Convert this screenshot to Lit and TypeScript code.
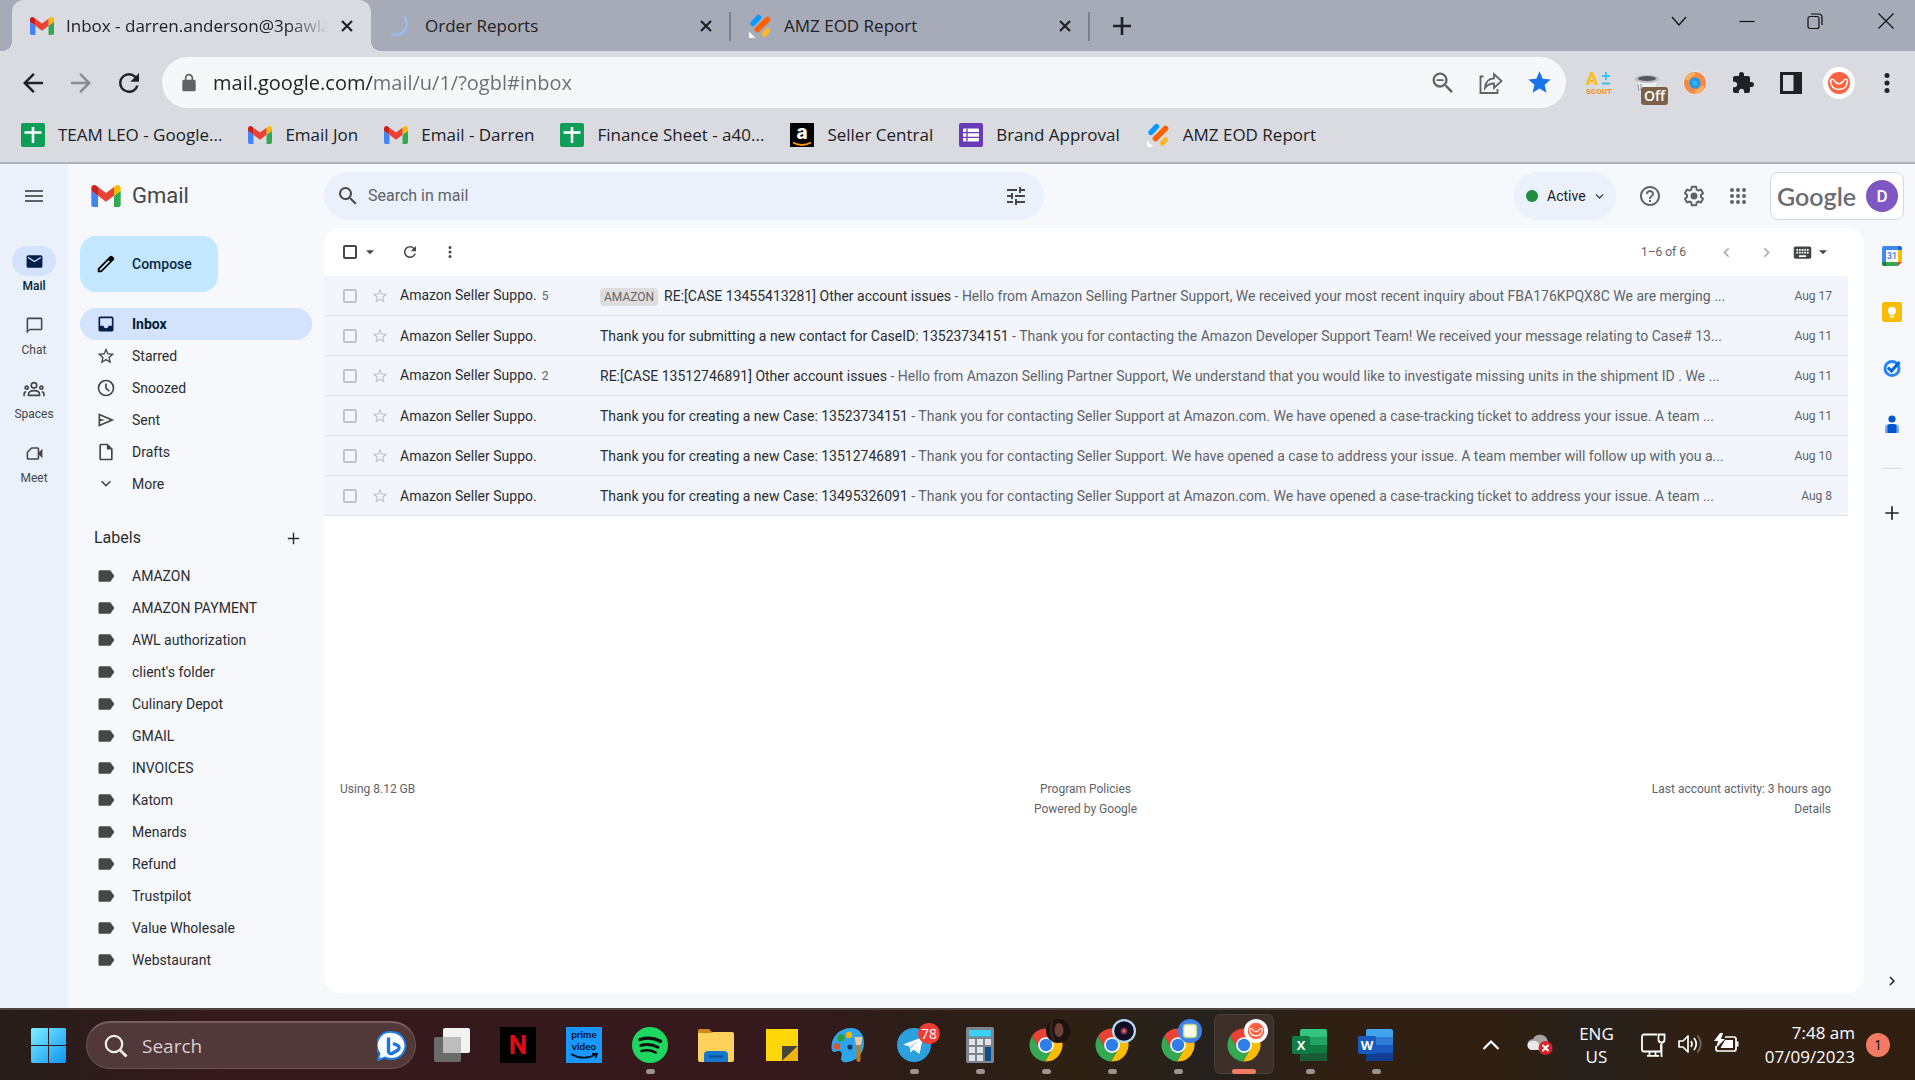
import { LitElement, html, svg, css, nothing } from "lit";
import type { TemplateResult, SVGTemplateResult } from "lit";
import { customElement } from "lit/decorators.js";
import { classMap } from "lit/directives/class-map.js";

/* ---------- icon helpers ---------- */

const glyph = (d: string, size = 20) =>
  html`<svg width=${size} height=${size} viewBox="0 0 24 24" fill="currentColor" aria-hidden="true"><path fill-rule="evenodd" d=${d}></path></svg>`;

const art = (w: number, h: number, box: string, body: SVGTemplateResult) =>
  html`<svg width=${w} height=${h} viewBox=${box} fill="none" aria-hidden="true">${body}</svg>`;

const P = {
  search: "M15.5 14h-.79l-.28-.27A6.471 6.471 0 0 0 16 9.5 6.5 6.5 0 1 0 9.5 16c1.61 0 3.09-.59 4.23-1.57l.27.28v.79l5 4.99L20.49 19l-4.99-5zm-6 0C7.01 14 5 11.99 5 9.5S7.01 5 9.5 5 14 7.01 14 9.5 11.99 14 9.5 14z",
  zoomOut: "M15.5 14h-.79l-.28-.27A6.471 6.471 0 0 0 16 9.5 6.5 6.5 0 1 0 9.5 16c1.61 0 3.09-.59 4.23-1.57l.27.28v.79l5 4.99L20.49 19l-4.99-5zm-6 0C7.01 14 5 11.99 5 9.5S7.01 5 9.5 5 14 7.01 14 9.5 11.99 14 9.5 14zM6.5 8.8h6v1.5h-6z",
  tune: "M3 17v2h6v-2H3zM3 5v2h10V5H3zm10 16v-2h8v-2h-8v-2h-2v6h2zM7 9v2H3v2h4v2h2V9H7zm14 4v-2H11v2h10zm-6-4h2V7h4V5h-4V3h-2v6z",
  help: "M11 18h2v-2h-2v2zm1-16C6.48 2 2 6.48 2 12s4.48 10 10 10 10-4.48 10-10S17.52 2 12 2zm0 18c-4.41 0-8-3.59-8-8s3.59-8 8-8 8 3.59 8 8-3.59 8-8 8zm0-14c-2.21 0-4 1.79-4 4h2c0-1.1.9-2 2-2s2 .9 2 2c0 2-3 1.75-3 5h2c0-2.25 3-2.5 3-5 0-2.21-1.79-4-4-4z",
  gear: "M13.85 22.25h-3.7c-.74 0-1.36-.54-1.45-1.27l-.27-1.89c-.27-.14-.53-.29-.79-.46l-1.8.72c-.7.26-1.47-.03-1.81-.65L2.2 15.53c-.35-.66-.2-1.44.36-1.88l1.53-1.19c-.01-.15-.02-.3-.02-.46 0-.15.01-.31.02-.46l-1.52-1.19c-.59-.45-.74-1.26-.37-1.88l1.85-3.19c.34-.62 1.11-.9 1.79-.63l1.81.73c.26-.17.52-.32.78-.46l.27-1.91c.09-.7.71-1.25 1.44-1.25h3.7c.74 0 1.36.54 1.45 1.27l.27 1.89c.27.14.53.29.79.46l1.8-.72c.71-.26 1.48.03 1.82.65l1.84 3.18c.36.66.2 1.44-.36 1.88l-1.52 1.19c.01.15.02.3.02.46s-.01.31-.02.46l1.52 1.19c.56.45.72 1.23.37 1.86l-1.86 3.22c-.34.62-1.11.9-1.8.63l-1.8-.72c-.26.17-.52.32-.78.46l-.27 1.91c-.1.68-.72 1.22-1.46 1.22zm-3.23-2h2.76l.37-2.55.53-.22c.44-.18.88-.44 1.34-.78l.45-.34 2.38.96 1.38-2.4-2.03-1.58.07-.56c.03-.26.06-.51.06-.78s-.03-.53-.06-.78l-.07-.56 2.03-1.58-1.39-2.4-2.39.96-.45-.35c-.42-.32-.87-.58-1.33-.77l-.52-.22-.37-2.55h-2.76l-.37 2.55-.53.21c-.44.19-.88.44-1.34.79l-.45.33-2.38-.95-1.39 2.39 2.03 1.58-.07.56a7 7 0 0 0-.06.79c0 .26.02.53.06.78l.07.56-2.03 1.58 1.38 2.4 2.39-.96.45.35c.43.33.86.58 1.33.77l.53.22.38 2.55zM12 8.5a3.5 3.5 0 1 0 0 7 3.5 3.5 0 0 0 0-7z",
  apps: "M6 8a2 2 0 1 0 0-4 2 2 0 0 0 0 4zm6 0a2 2 0 1 0 0-4 2 2 0 0 0 0 4zm6 0a2 2 0 1 0 0-4 2 2 0 0 0 0 4zM6 14a2 2 0 1 0 0-4 2 2 0 0 0 0 4zm6 0a2 2 0 1 0 0-4 2 2 0 0 0 0 4zm6 0a2 2 0 1 0 0-4 2 2 0 0 0 0 4zM6 20a2 2 0 1 0 0-4 2 2 0 0 0 0 4zm6 0a2 2 0 1 0 0-4 2 2 0 0 0 0 4zm6 0a2 2 0 1 0 0-4 2 2 0 0 0 0 4z",
  starLine: "M22 9.24l-7.19-.62L12 2 9.19 8.63 2 9.24l5.46 4.73L5.82 21 12 17.27 18.18 21l-1.63-7.03L22 9.24zM12 15.4l-3.76 2.27 1-4.28-3.32-2.88 4.38-.38L12 6.1l1.71 4.04 4.38.38-3.32 2.88 1 4.28L12 15.4z",
  star: "M12 17.27L18.18 21l-1.64-7.03L22 9.24l-7.19-.61L12 2 9.19 8.63 2 9.24l5.46 4.73L5.82 21z",
  clock: "M12 2a10 10 0 1 0 0 20 10 10 0 0 0 0-20zm0 18a8 8 0 1 1 0-16 8 8 0 0 1 0 16zM11 6.5v6l4.2 4.1 1.4-1.4-3.6-3.6V6.5z",
  send: "M3 20V4l19 8zm2-3l11.85-5L5 7v3.5l6 1.5-6 1.5z",
  draft: "M14 2H6c-1.1 0-2 .9-2 2v16c0 1.1.9 2 2 2h12c1.1 0 2-.9 2-2V8l-6-6zM6 20V4h7v5h5v11H6z",
  inbox: "M19 3H5c-1.1 0-2 .9-2 2v14c0 1.1.9 2 2 2h14c1.1 0 2-.9 2-2V5c0-1.1-.9-2-2-2zm0 11h-4c0 1.66-1.35 3-3 3s-3-1.34-3-3H5V5h14v9z",
  more: "M12 15.4l-6-6L7.4 8l4.6 4.6L16.6 8 18 9.4z",
  mail: "M20 4H4c-1.1 0-2 .9-2 2v12c0 1.1.9 2 2 2h16c1.1 0 2-.9 2-2V6c0-1.1-.9-2-2-2zm0 4l-8 5-8-5V6l8 5 8-5v2z",
  chat: "M20 2H4c-1.1 0-2 .9-2 2v18l4-4h14c1.1 0 2-.9 2-2V4c0-1.1-.9-2-2-2zm0 14H6l-2 2V4h16v12z",
  meet: "M8 4h8a2 2 0 0 1 2 2v4l4-4v12l-4-4v4a2 2 0 0 1-2 2H4a2 2 0 0 1-2-2v-8zm.8 2L4 10.8V18h12V6z",
  label: "M17.63 5.84C17.27 5.33 16.67 5 16 5L5 5.01C3.9 5.01 3 5.9 3 7v10c0 1.1.9 1.99 2 1.99L16 19c.67 0 1.27-.33 1.63-.84L22 12l-4.37-6.16z",
  pen: "M20.41 4.94l-1.35-1.35c-.78-.78-2.05-.78-2.83 0L3 16.82V21h4.18L20.41 7.77c.79-.78.79-2.05 0-2.83zm-14 14.12L5 19v-1.36l9.82-9.82 1.41 1.41-9.82 9.83z",
  refresh: "M17.65 6.35A7.958 7.958 0 0 0 12 4a8 8 0 1 0 7.73 10h-2.08A5.99 5.99 0 0 1 12 18c-3.31 0-6-2.69-6-6s2.69-6 6-6c1.66 0 3.14.69 4.22 1.78L13 11h7V4l-2.35 2.35z",
  dots: "M12 8a2 2 0 1 0 0-4 2 2 0 0 0 0 4zm0 6a2 2 0 1 0 0-4 2 2 0 0 0 0 4zm0 6a2 2 0 1 0 0-4 2 2 0 0 0 0 4z",
  keyboard: "M20 5H4c-1.1 0-1.99.9-1.99 2L2 17c0 1.1.9 2 2 2h16c1.1 0 2-.9 2-2V7c0-1.1-.9-2-2-2zm-9 3h2v2h-2V8zm0 3h2v2h-2v-2zM8 8h2v2H8V8zm0 3h2v2H8v-2zm-1 2H5v-2h2v2zm0-3H5V8h2v2zm9 7H8v-2h8v2zm0-4h-2v-2h2v2zm0-3h-2V8h2v2zm3 3h-2v-2h2v2zm0-3h-2V8h2v2z",
  back: "M20 11H7.83l5.59-5.59L12 4l-8 8 8 8 1.41-1.41L7.83 13H20v-2z",
  forward: "M4 11h12.17l-5.59-5.59L12 4l8 8-8 8-1.41-1.41L16.17 13H4v-2z",
  puzzle: "M20.5 11H19V7c0-1.1-.9-2-2-2h-4V3.5a2.5 2.5 0 0 0-5 0V5H4c-1.1 0-1.99.9-1.99 2v3.8H3.5c1.49 0 2.7 1.21 2.7 2.7s-1.21 2.7-2.7 2.7H2V20c0 1.1.9 2 2 2h3.8v-1.5c0-1.49 1.21-2.7 2.7-2.7s2.7 1.21 2.7 2.7V22H17c1.1 0 2-.9 2-2v-4h1.5a2.5 2.5 0 0 0 0-5z",
  lock: "M18 8h-1V6c0-2.76-2.24-5-5-5S7 3.24 7 6v2H6c-1.1 0-2 .9-2 2v10c0 1.1.9 2 2 2h12c1.1 0 2-.9 2-2V10c0-1.1-.9-2-2-2zM9 6c0-1.66 1.34-3 3-3s3 1.34 3 3v2H9V6z",
  plus: "M11 4h2v7h7v2h-7v7h-2v-7H4v-2h7z",
  prev: "M15.4 7.4L14 6l-6 6 6 6 1.4-1.4L10.8 12z",
  next: "M8.6 16.6L10 18l6-6-6-6-1.4 1.4 4.6 4.6z",
  caret: "M6 9.5h12l-6 6z",
  menu: "M3 18h18v-2H3v2zm0-5h18v-2H3v2zm0-7v2h18V6H3z",
};

const gmailMark = (w: number, h: number) => art(w, h, "52 42 88 66", svg`
  <path fill="#4285f4" d="M58 108h14V74L52 59v43c0 3.32 2.69 6 6 6"/>
  <path fill="#34a853" d="M120 108h14c3.32 0 6-2.69 6-6V59l-20 15"/>
  <path fill="#fbbc04" d="M120 48v26l20-15v-8c0-7.42-8.47-11.65-14.4-7.2"/>
  <path fill="#ea4335" d="M72 74V48l24 18 24-18v26L96 92"/>
  <path fill="#c5221f" d="M52 51v8l20 15V48l-5.6-4.2c-5.94-4.45-14.4-.22-14.4 7.2"/>`);

const jotMark = art(24, 24, "0 0 24 24", svg`
  <g stroke-linecap="round">
    <path d="M5 9.500 10.500 3.500" stroke="#0a99ff" stroke-width="5.400"/>
    <path d="M9.500 15.500 19.500 5.500" stroke="#ff6100" stroke-width="5.600"/>
    <path d="M16.500 20.300 19.500 16.800" stroke="#ffb629" stroke-width="5.200"/>
  </g>
  <path d="M1 17.500v5.500a1 1 0 0 0 1 1h5.500z" fill="#fff"/>`);

const sheetMark = art(24, 24, "0 0 24 24", svg`
  <rect width="24" height="24" rx="2" fill="#0f9d58"/>
  <path d="M12 4v16M3.500 9.500h17" stroke="#fff" stroke-width="2.600"/>`);

const amazonMark = art(24, 24, "0 0 24 24", svg`
  <rect width="24" height="24" fill="#000"/>
  <text x="12" y="16" text-anchor="middle" font-family="Inter, sans-serif" font-weight="800" font-size="19" fill="#fff">a</text>
  <path d="M3 19.500q9 5 18 0" stroke="#f90" stroke-width="1.800"/>`);

const formMark = art(24, 24, "0 0 24 24", svg`
  <rect width="24" height="24" rx="2" fill="#673ab7"/>
  <rect x="4" y="5.500" width="16" height="13" rx="1" fill="#fff"/>
  <path d="M4 9.700h16M4 14.300h16M8 5.500v13" stroke="#673ab7" stroke-width="1.300"/>`);

const smile = svg`
  <circle cx="16" cy="16" r="16" fill="#fff"/>
  <circle cx="16" cy="16" r="11" fill="#ff6240"/>
  <path d="M7.500 13.500q2-2.500 4 .5 4.500 5.500 9 0 2-3 4-.5-.5 9-8.500 9t-8.500-9z" stroke="#fff" stroke-width="1.500" stroke-linejoin="round"/>`;

/* ---------- browser frame ---------- */

@customElement("browser-frame")
class BrowserFrame extends LitElement {
  static styles = css`
    :host { display: block; font: 17px/24px "Open Sans", "Noto Sans", sans-serif; color: #202124; background: #d9dbe1; }
    svg { display: block; flex: none; }
    button { border: 0; padding: 0; background: none; color: inherit; font: inherit; display: grid; place-items: center; flex: none; }
    a { color: inherit; text-decoration: none; }
    .strip { display: flex; height: 51px; background: #a7abb8; padding-left: 12px; }
    .tab { display: flex; align-items: center; width: 359px; box-sizing: border-box; padding: 0 17px 0 18px; gap: 12px; position: relative; }
    .tab.on { background: #d9dbe1; border-radius: 12px 12px 0 0; }
    .tab.on::before, .tab.on::after { content: ""; position: absolute; bottom: 0; width: 10px; height: 10px; background: radial-gradient(circle at 0 0, transparent 10px, #d9dbe1 10px); }
    .tab.on::before { left: -10px; }
    .tab.on::after { right: -10px; transform: scaleX(-1); }
    .tab.line::after { content: ""; position: absolute; right: -1px; top: 12px; width: 2px; height: 29px; background: #7d808a; }
    .name { flex: 1; min-width: 0; overflow: hidden; white-space: nowrap; }
    .on .name { mask-image: linear-gradient(90deg, #000 84%, transparent); }
    .new { width: 66px; height: 51px; }
    .wins { display: flex; margin-left: auto; }
    .wins button { width: 68px; height: 42px; box-sizing: border-box; }
    .wins button:last-child { width: 66px; padding-left: 8px; }
    .bar { display: flex; align-items: center; height: 51px; padding: 6px 4px 0 9px; }
    .nav { width: 48px; height: 48px; }
    .nav.off { color: #898b90; }
    .omni { flex: 1; display: flex; align-items: center; height: 51px; border-radius: 26px; background: #f5f7f9; margin: 0 9px 0 9px; padding-left: 17px; padding-right: 3px; color: #5f6368; }
    .url { flex: 1; min-width: 0; border: 0; outline: 0; padding: 0; margin-left: 14px; font: 20px/28px "Open Sans", "Noto Sans", sans-serif; color: transparent; background: linear-gradient(90deg, #202124 160px, #6a6d72 160px); background-clip: text; -webkit-background-clip: text; }
    .fave { color: #1a73e8; }
    .ext { width: 48px; height: 48px; position: relative; }
    .off-tag { position: absolute; left: 18px; top: 28px; width: 27px; height: 18px; border-radius: 3px; background: #7b6147; color: #fff; font-weight: 600; font-size: 14px; line-height: 18px; }
    .marks { display: flex; align-items: center; height: 54px; padding-left: 21px; gap: 26px; border-bottom: 2px solid #b0b2b8; }
    .mark { display: flex; align-items: center; gap: 13px; white-space: nowrap; }
  `;

  private closeX = art(14, 14, "0 0 14 14", svg`<path d="M2 2l10 10M12 2L2 12" stroke="#202124" stroke-width="2.200"/>`);

  private tab(icon: TemplateResult, name: string, cls: object) {
    return html`<div class=${classMap({ tab: true, ...cls })}>
      ${icon}<span class="name">${name}</span>
      <button aria-label="Close tab">${this.closeX}</button>
    </div>`;
  }

  render() {
    const gm = gmailMark(24, 18);
    const spin = art(24, 24, "0 0 24 24", svg`<path d="M15 2.500a11 11 0 0 1-12.500 17.500" stroke="#9abcf2" stroke-width="2.600"/>`);
    const win = (d: string) => art(18, 18, "0 0 18 18", svg`<path d=${d} stroke="#111" stroke-width="1.200"/>`);
    const marks: [TemplateResult, string][] = [
      [sheetMark, "TEAM LEO - Google..."], [gm, "Email Jon"], [gm, "Email - Darren"],
      [sheetMark, "Finance Sheet - a40..."], [amazonMark, "Seller Central"],
      [formMark, "Brand Approval"], [jotMark, "AMZ EOD Report"],
    ];
    return html`
      <div class="strip">
        ${this.tab(gm, "Inbox - darren.anderson@3pawlabs.com", { on: true })}
        ${this.tab(spin, "Order Reports", { line: true })}
        ${this.tab(jotMark, "AMZ EOD Report", { line: true })}
        <button class="new" aria-label="New tab">${art(20, 20, "0 0 20 20", svg`<path d="M10 1v18M1 10h18" stroke="#202124" stroke-width="2.600"/>`)}</button>
        <div class="wins">
          <button aria-label="Search tabs">${win("M2 5l7 8 7-8")}</button>
          <button aria-label="Minimize">${win("M1.500 9.500h15")}</button>
          <button aria-label="Restore">${win("M4 4.500h7a2 2 0 0 1 2 2v8a2 2 0 0 1-2 2H4a2 2 0 0 1-2-2v-8a2 2 0 0 1 2-2zM5 2h7.500a3.500 3.500 0 0 1 3.500 3.500V13")}</button>
          <button aria-label="Close window">${win("M1.500 1.500l15 15M16.500 1.500l-15 15")}</button>
        </div>
      </div>
      <div class="bar">
        <button class="nav" aria-label="Back">${glyph(P.back, 30)}</button>
        <button class="nav off" aria-label="Forward">${glyph(P.forward, 30)}</button>
        <button class="nav" aria-label="Reload">${glyph(P.refresh, 30)}</button>
        <div class="omni">
          ${glyph(P.lock, 20)}
          <input class="url" aria-label="Address" value="mail.google.com/mail/u/1/?ogbl#inbox" />
          <button class="nav" aria-label="Zoom">${glyph(P.zoomOut, 28)}</button>
          <button class="nav" aria-label="Share">${art(24, 24, "0 0 24 24", svg`<path d="M4.500 5.500H1.500V22h17v-4M6 17c.5-7 4-9.500 9-9.700V3l7.500 7-7.500 7v-4.500c-4 0-6.500 1-9 4.500z" stroke="#5f6368" stroke-width="1.800"/>`)}</button>
          <button class="nav fave" aria-label="Bookmark">${glyph(P.star, 27)}</button>
        </div>
        <button class="ext" aria-label="Scout">${art(28, 28, "0 0 28 28", svg`
          <text x="1" y="16" font-family="Roboto, sans-serif" font-weight="900" font-size="18" fill="#fbbf24">A</text>
          <path d="M21 3v8M17 7h8M17 14.500h8" stroke="#35c3ee" stroke-width="1.800"/>
          <text x="1" y="25" font-family="Roboto, sans-serif" font-weight="900" font-size="8" fill="#f5962a">SCOUT</text>`)}</button>
        <button class="ext" aria-label="Coupon tool off">${art(26, 24, "0 0 26 24", svg`
          <path d="M3 8h20l-2.500 14h-15z" fill="#eceef0"/><path d="M4 13l1 7M7 13v7" stroke="#8d9094"/>
          <ellipse cx="13" cy="8" rx="12" ry="4" fill="#b9bcc1"/><ellipse cx="13" cy="7.500" rx="9" ry="2.600" fill="#55585c"/>`)}<span class="off-tag">Off</span></button>
        <button class="ext" aria-label="Capture">${art(24, 24, "0 0 24 24", svg`
          <circle cx="12" cy="12" r="12" fill="#f1e3d6"/><circle cx="12" cy="12" r="8" stroke="#ee8a4a" stroke-width="6"/>
          <path d="M4 9a9 9 0 0 1 8-6M20 15a9 9 0 0 1-8 6" stroke="#f9b66a" stroke-width="3"/>
          <circle cx="12" cy="12" r="5.500" fill="#2196e8"/><circle cx="12" cy="12" r="2.600" fill="#2bb9f6"/>`)}</button>
        <button class="ext" aria-label="Extensions">${glyph(P.puzzle, 24)}</button>
        <button class="ext" aria-label="Side panel">${art(22, 22, "0 0 22 22", svg`<path fill-rule="evenodd" d="M0 0h22v22H0zM3 3v16h10.500V3z" fill="#202124"/>`)}</button>
        <button class="ext" aria-label="Profile">${art(32, 32, "0 0 32 32", smile)}</button>
        <button class="ext" aria-label="Browser menu">${glyph(P.dots, 30)}</button>
      </div>
      <div class="marks">${marks.map(([i, t]) => html`<a class="mark" href="#">${i}<span>${t}</span></a>`)}</div>
    `;
  }
}

/* ---------- mail ---------- */

interface Mail { count?: string; tag?: string; subject: string; body: string; date: string; }

const MAILS: Mail[] = [
  { count: "5", tag: "AMAZON", subject: "RE:[CASE 13455413281] Other account issues", body: "Hello from Amazon Selling Partner Support, We received your most recent inquiry about FBA176KPQX8C We are merging ...", date: "Aug 17" },
  { subject: "Thank you for submitting a new contact for CaseID: 13523734151", body: "Thank you for contacting the Amazon Developer Support Team! We received your message relating to Case# 13...", date: "Aug 11" },
  { count: "2", subject: "RE:[CASE 13512746891] Other account issues", body: "Hello from Amazon Selling Partner Support, We understand that you would like to investigate missing units in the shipment ID . We ...", date: "Aug 11" },
  { subject: "Thank you for creating a new Case: 13523734151", body: "Thank you for contacting Seller Support at Amazon.com. We have opened a case-tracking ticket to address your issue. A team ...", date: "Aug 11" },
  { subject: "Thank you for creating a new Case: 13512746891", body: "Thank you for contacting Seller Support. We have opened a case to address your issue. A team member will follow up with you a...", date: "Aug 10" },
  { subject: "Thank you for creating a new Case: 13495326091", body: "Thank you for contacting Seller Support at Amazon.com. We have opened a case-tracking ticket to address your issue. A team ...", date: "Aug 8" },
];

const LABELS = ["AMAZON", "AMAZON PAYMENT", "AWL authorization", "client's folder", "Culinary Depot", "GMAIL", "INVOICES", "Katom", "Menards", "Refund", "Trustpilot", "Value Wholesale", "Webstaurant"];

@customElement("mail-app")
class MailApp extends LitElement {
  static styles = css`
    :host { display: grid; grid-template-columns: 68px 256px minmax(0, 1fr); background: #f6f8fc; color: #202124; font: 14px/20px Roboto, "Liberation Sans", sans-serif; }
    svg { display: block; flex: none; }
    button { border: 0; padding: 0; background: none; color: inherit; font: inherit; display: grid; place-items: center; flex: none; }
    a { color: inherit; text-decoration: none; }
    ul { list-style: none; margin: 0; padding: 0; }
    input[type="checkbox"] { appearance: none; display: block; margin: 0; width: 14px; height: 14px; box-sizing: border-box; border: 2px solid #c0c4c9; border-radius: 2px; }

    .rail { background: #eaf1fb; color: #444746; display: flex; flex-direction: column; align-items: center; }
    .burger { height: 64px; width: 48px; color: #5f6368; }
    .apps { display: flex; flex-direction: column; padding-top: 18px; }
    .app { display: flex; flex-direction: column; align-items: center; height: 64px; font-size: 12px; line-height: 20px; }
    .pill { width: 44px; height: 30px; border-radius: 15px; display: grid; place-items: center; }
    .app.on { color: #001d35; font-weight: 500; }
    .on .pill { background: #d3e3fd; color: #041e49; }

    .side { display: flex; flex-direction: column; padding: 0 12px; color: #2a2c30; }
    .brand { display: flex; align-items: center; gap: 11px; height: 64px; padding-left: 11px; font-size: 22px; color: #444746; }
    .compose { display: flex; align-items: center; justify-content: flex-start; gap: 15px; align-self: flex-start; width: 138px; box-sizing: border-box; height: 56px; margin: 8px 0 16px; padding-left: 15px; border-radius: 16px; background: #c2e7ff; color: #0b2a45; font-weight: 500; }
    .compose svg { color: #000; }
    .item { display: flex; align-items: center; gap: 16px; height: 32px; padding-left: 16px; border-radius: 16px; }
    .item svg { color: #444746; }
    .item.on { background: #d3e3fd; color: #001d35; font-weight: 700; }
    .item.on svg { color: #041e49; }
    .head { display: flex; justify-content: space-between; align-items: center; height: 32px; margin: 22px 0 6px; padding: 0 10px 0 14px; font-size: 16px; }
    h2 { font: inherit; margin: 0; font-weight: 400; }

    .top { display: flex; align-items: center; height: 64px; padding-right: 11px; color: #5f6368; }
    .search { display: flex; align-items: center; flex: 0 1 720px; min-width: 0; height: 48px; border-radius: 24px; background: #eaf1fb; color: #444746; padding: 0 16px 0 12px; gap: 8px; box-sizing: border-box; }
    .search input { flex: 1; min-width: 0; border: 0; outline: 0; background: none; font: 16px/24px Roboto, sans-serif; padding: 0; }
    .search input::placeholder { color: #5f6368; opacity: 1; }
    .status { display: flex; align-items: center; gap: 9px; width: 102px; height: 48px; border-radius: 24px; background: #eaf1fb; margin-left: auto; margin-right: 12px; padding-left: 12px; box-sizing: border-box; color: #202124; }
    .dot { width: 12px; height: 12px; border-radius: 6px; background: #1e8e3e; }
    .tool { width: 44px; height: 44px; }
    .account { display: flex; align-items: center; justify-content: space-between; width: 134px; height: 48px; margin-left: 10px; padding: 0 5px 0 6px; box-sizing: border-box; border: 1px solid #d5d8de; border-radius: 8px; background: #fff; }
    .google { font: 600 25px/32px "Lato", sans-serif; color: #6a6d72; }
    .me { width: 32px; height: 32px; border-radius: 16px; background: #7e57c2; color: #fff; font-size: 17px; font-weight: 500; }

    .right { display: flex; flex-direction: column; min-width: 0; }
    .body { flex: 1; display: grid; grid-template-columns: minmax(0, 1fr) 51px; }
    .panel { background: #fff; border-radius: 16px; margin-bottom: 15px; padding-right: 16px; display: flex; flex-direction: column; min-width: 0; }
    .tools { display: flex; align-items: center; height: 48px; padding: 0 17px 0 19px; color: #444746; }
    .tools input[type="checkbox"] { border-color: #444746; }
    .tools .drop { width: 16px; height: 24px; margin-left: 5px; }
    .tools .act { width: 40px; height: 40px; margin-left: 12px; }
    .tools .act + .act { margin-left: 0; }
    .range { margin-left: auto; margin-right: 20px; font-size: 12px; color: #5f6368; }
    .step { width: 40px; height: 40px; color: #a5a8ac; }
    .keys { display: flex; gap: 2px; margin-left: 6px; }
    table { width: 100%; border-collapse: collapse; table-layout: fixed; background: #f2f6fc; color: #2a2c30; }
    td { height: 39px; padding: 0; border-bottom: 1px solid #dfe2ea; white-space: nowrap; overflow: hidden; }
    .c1 { width: 47px; } .c2 { width: 29px; } .c3 { width: 200px; } .c5 { width: 110px; }
    td:first-child { padding-left: 19px; }
    .st { color: #c0c4c9; }
    .num { font-size: 12px; color: #5f6368; margin-left: 5px; }
    .body-text, .date { color: #5f6368; }
    .date { text-align: right; font-size: 12px; padding-right: 16px; }
    .tag { display: inline-block; background: #ddd; color: #666; font-size: 12px; line-height: 18px; border-radius: 4px; padding: 0 4px; margin-right: 6px; }
    .foot { display: grid; grid-template-columns: 1fr 1fr 1fr; padding: 263px 17px 0 16px; font-size: 12px; color: #5f6368; }
    .foot p { margin: 0; }
    .foot .mid { text-align: center; }
    .foot .end { text-align: right; }

    .addons { display: flex; flex-direction: column; align-items: center; padding: 0 0 12px 5px; }
    .addons button { width: 40px; height: 56px; }
    .rule { width: 20px; height: 1px; border: 0; margin: 16px 0; background: #d8dbdf; }
    .addons .fold { height: 30px; margin-top: auto; }
  `;

  private row(m: Mail) {
    return html`<tr>
      <td><input type="checkbox" aria-label=${"Select " + m.subject} /></td>
      <td class="st"><button aria-label="Star">${glyph(P.starLine, 18)}</button></td>
      <td>Amazon Seller Suppo.${m.count ? html`<span class="num">${m.count}</span>` : nothing}</td>
      <td>${m.tag ? html`<span class="tag">${m.tag}</span>` : nothing}<span>${m.subject}</span><span class="body-text"> - ${m.body}</span></td>
      <td class="date">${m.date}</td>
    </tr>`;
  }

  render() {
    const groups = art(22, 22, "0 0 24 24", svg`<g stroke="currentColor" stroke-width="1.800">
      <circle cx="12" cy="8" r="3"/><path d="M6 19v-1.500c0-2.500 3-3.800 6-3.800s6 1.300 6 3.800V19z"/>
      <circle cx="4" cy="10.500" r="1.700"/><circle cx="20" cy="10.500" r="1.700"/><path d="M1.200 20v-2.500c0-1.500.8-2.300 2.300-2.500M22.800 20v-2.500c0-1.500-.8-2.300-2.300-2.500"/></g>`);
    const rail: [string, TemplateResult][] = [["Mail", glyph(P.mail, 19)], ["Chat", glyph(P.chat, 19)], ["Spaces", groups], ["Meet", glyph(P.meet, 19)]];
    const nav: [string, string][] = [["Inbox", P.inbox], ["Starred", P.starLine], ["Snoozed", P.clock], ["Sent", P.send], ["Drafts", P.draft], ["More", P.more]];
    return html`
      <nav class="rail">
        <button class="burger" aria-label="Main menu">${glyph(P.menu, 24)}</button>
        <div class="apps">${rail.map(([n, i], k) => html`<a href="#" class=${classMap({ app: true, on: k === 0 })}><span class="pill">${i}</span>${n}</a>`)}</div>
      </nav>
      <aside class="side">
        <div class="brand">${gmailMark(30, 22)}<span>Gmail</span></div>
        <button class="compose">${glyph(P.pen, 22)}Compose</button>
        <ul>${nav.map(([n, d], k) => html`<li><a href="#" class=${classMap({ item: true, on: k === 0 })}>${glyph(d, 20)}${n}</a></li>`)}</ul>
        <div class="head"><h2>Labels</h2><button aria-label="Create label">${glyph(P.plus, 17)}</button></div>
        <ul>${LABELS.map((n) => html`<li><a href="#" class="item">${glyph(P.label, 20)}${n}</a></li>`)}</ul>
      </aside>
      <div class="right">
        <header class="top">
          <div class="search">
            <button aria-label="Search">${glyph(P.search, 24)}</button>
            <input type="search" aria-label="Search in mail" placeholder="Search in mail" />
            <button aria-label="Search options">${glyph(P.tune, 24)}</button>
          </div>
          <button class="status"><span class="dot"></span>Active ${art(9, 9, "0 0 9 9", svg`<path d="M1 2.500l3.500 3.500L8 2.500" stroke="#444746" stroke-width="1.300"/>`)}</button>
          <button class="tool" aria-label="Support">${glyph(P.help, 24)}</button>
          <button class="tool" aria-label="Settings">${glyph(P.gear, 24)}</button>
          <button class="tool" aria-label="Google apps">${glyph(P.apps, 24)}</button>
          <div class="account"><span class="google">Google</span><button class="me" aria-label="Account">D</button></div>
        </header>
        <div class="body">
          <main class="panel">
            <div class="tools">
              <input type="checkbox" aria-label="Select all" />
              <button class="drop" aria-label="Select options">${glyph(P.caret, 16)}</button>
              <button class="act" aria-label="Refresh">${glyph(P.refresh, 18)}</button>
              <button class="act" aria-label="More actions">${glyph(P.dots, 18)}</button>
              <span class="range">1–6 of 6</span>
              <button class="step" aria-label="Newer">${glyph(P.prev, 19)}</button>
              <button class="step" aria-label="Older">${glyph(P.next, 19)}</button>
              <button class="keys" aria-label="Input tools">${glyph(P.keyboard, 21)}${glyph(P.caret, 16)}</button>
            </div>
            <table>
              <colgroup><col class="c1" /><col class="c2" /><col class="c3" /><col /><col class="c5" /></colgroup>
              <tbody>${MAILS.map((m) => this.row(m))}</tbody>
            </table>
            <footer class="foot">
              <p>Using 8.12 GB</p>
              <p class="mid">Program Policies<br />Powered by Google</p>
              <p class="end">Last account activity: 3 hours ago<br />Details</p>
            </footer>
          </main>
          <aside class="addons">
            <button aria-label="Calendar">${art(20, 20, "0 0 20 20", svg`
              <path d="M2 0h14v4H4v12H0V2a2 2 0 0 1 2-2z" fill="#4285f4"/><path d="M16 0h2a2 2 0 0 1 2 2v2h-4z" fill="#1967d2"/>
              <path d="M16 4h4v12h-4z" fill="#fbbc04"/><path d="M4 16h12v4H4z" fill="#34a853"/><path d="M0 16h4v4H2a2 2 0 0 1-2-2z" fill="#188038"/>
              <path d="M16 16h4l-4 4z" fill="#ea4335"/><path d="M4 4h12v12H4z" fill="#fff"/>
              <text x="10" y="13" text-anchor="middle" font-family="Roboto, sans-serif" font-weight="700" font-size="8.500" fill="#4285f4">31</text>`)}</button>
            <button aria-label="Keep">${art(20, 20, "0 0 20 20", svg`
              <rect width="20" height="20" rx="2" fill="#fbbc04"/><circle cx="10" cy="8.800" r="4" fill="#fff"/><path d="M8 11h4v2H8zM8 13.800h4v1.600H8z" fill="#fff"/>`)}</button>
            <button aria-label="Tasks">${art(20, 20, "0 0 20 20", svg`
              <circle cx="10" cy="10.500" r="7" stroke="#2684fc" stroke-width="3"/><path d="M6 9.500l3.500 3.500L17.500 4" stroke="#0066da" stroke-width="3"/>`)}</button>
            <button aria-label="Contacts">${art(16, 20, "0 0 16 20", svg`
              <circle cx="8" cy="5" r="3.600" fill="#0057cc"/><path d="M1 19v-5a4 4 0 0 1 4-4h6a4 4 0 0 1 4 4v5z" fill="#7baaf7"/><path d="M3.500 19v-6a3 3 0 0 1 3-3h3a3 3 0 0 1 3 3v6z" fill="#0057cc"/>`)}</button>
            <hr class="rule" />
            <button aria-label="Get add-ons">${glyph(P.plus, 20)}</button>
            <button class="fold" aria-label="Hide side panel">${glyph(P.next, 18)}</button>
          </aside>
        </div>
      </div>
    `;
  }
}

/* ---------- taskbar ---------- */

interface TaskApp { name: string; icon: TemplateResult; state?: "open" | "active"; badge?: TemplateResult; }

const chrome = art(36, 36, "0 0 48 48", svg`
  <path fill="#ea4335" d="M5.540 12.030A22 22 0 0 1 43.600 14H24v10l-8.660 5z"/>
  <path fill="#34a853" d="M5.540 12.030A22 22 0 0 0 22.860 45.970L32.660 29 24 24l-8.660 5z"/>
  <path fill="#fbbc04" d="M43.600 14a22 22 0 0 1-20.740 31.970L32.660 29 24 24V14z"/>
  <circle cx="24" cy="24" r="10.500" fill="#fff"/><circle cx="24" cy="24" r="8.300" fill="#2f7de9"/>`);

const office = (letter: string, c: string[]) => art(36, 34, "0 0 36 34", svg`
  <rect x="8" y="1" width="27" height="32" rx="2" fill=${c[0]}/>
  <path d="M8 9h27v8H8z" fill=${c[1]}/><path d="M8 17h27v8H8z" fill=${c[2]}/><path d="M8 25h27v6a2 2 0 0 1-2 2H10a2 2 0 0 1-2-2z" fill=${c[3]}/>
  <rect x="0" y="8" width="18" height="18" rx="2" fill=${c[4]}/>
  <text x="9" y="22" text-anchor="middle" font-family="Open Sans, sans-serif" font-weight="700" font-size="13" fill="#fff">${letter}</text>`);

const TASKS: TaskApp[] = [
  { name: "Task view", icon: art(36, 36, "0 0 36 36", svg`<rect x="0" y="10" width="27" height="25" rx="2" fill="#6b6b6b"/><rect x="9" y="1" width="27" height="25" rx="2" fill="#f2f2f2"/><path d="M9 10h18v16H9z" fill="#bdbdbd"/>`) },
  { name: "Netflix", icon: art(36, 36, "0 0 36 36", svg`<rect width="36" height="36" fill="#000"/><text x="18" y="27" text-anchor="middle" font-family="Roboto, sans-serif" font-weight="700" font-size="26" fill="#e50914">N</text>`) },
  { name: "Prime Video", icon: art(36, 36, "0 0 36 36", svg`<rect width="36" height="36" fill="#1a98ff"/>
    <g font-family="Lato, sans-serif" font-weight="700" font-size="10" fill="#04111f" text-anchor="middle"><text x="18" y="11">prime</text><text x="18" y="23">video</text></g>
    <path d="M5 27q12 7 24 1M26 27h5l-1.500 4" stroke="#04111f" stroke-width="1.800"/>`) },
  { name: "Spotify", state: "open", icon: art(36, 36, "0 0 36 36", svg`<circle cx="18" cy="18" r="18" fill="#1ed760"/><g stroke="#101010" stroke-linecap="round"><path d="M8 12.500c7-2.200 14.500-1.500 20.500 1.800" stroke-width="3.400"/><path d="M8.800 18.500c6-1.700 12.200-1 17.200 1.800" stroke-width="2.900"/><path d="M9.500 24c5-1.300 10-.7 14.300 1.600" stroke-width="2.400"/></g>`) },
  { name: "File Explorer", icon: art(36, 34, "0 0 36 34", svg`<path d="M0 3a2 2 0 0 1 2-2h9l4 4H0z" fill="#d08a12"/><path d="M0 5h13l2-1h19a2 2 0 0 1 2 2v26a2 2 0 0 1-2 2H2a2 2 0 0 1-2-2z" fill="#fdd25c"/><path d="M6 34V27a4 4 0 0 1 4-4h16a4 4 0 0 1 4 4v7z" fill="#1478cc"/><path d="M11 28.500h14" stroke="#0b4f94" stroke-width="2"/>`) },
  { name: "Sticky Notes", icon: art(32, 32, "0 0 32 32", svg`<path d="M0 0h32v32H0z" fill="#ffd60a"/><path d="M16 32V17h16z" fill="#46423c"/><path d="M32 17v15H16z" fill="#f0b40c"/>`) },
  { name: "Paint", icon: art(36, 36, "0 0 36 36", svg`<path d="M21 1C10 1 2 9 1.500 19c-.3 5 1.500 7 5 5.500 4-1.500 6 1 5 4.500-1.500 5 1.500 7 6 6C27 34 34 26 34 16 34 7 29 1 21 1z" fill="#2ea5ea"/>
    <circle cx="19" cy="8" r="3.200" fill="#ffb200"/><circle cx="11" cy="11" r="3.600" fill="#2e9e35"/><circle cx="7" cy="19.500" r="3.200" fill="#e2542a"/><circle cx="20" cy="20" r="2.600" fill="#123a66"/>
    <path d="M28.500 18v15" stroke="#c27a1c" stroke-width="4" stroke-linecap="round"/><path d="M24.500 10h8l-1.500 8h-5z" fill="#efc79d"/>`) },
  { name: "Telegram", state: "open", icon: art(34, 34, "0 0 34 34", svg`<circle cx="17" cy="17" r="17" fill="#2ba0dc"/><path d="M6 16.500L26 9l-3.500 17-6-4.500-3 3-1-6z" fill="#fff"/><path d="M12.500 18.500L22 12l-7.500 8-1 4.500z" fill="#b9d9ec"/>`), badge: html`<span class="bubble">78</span>` },
  { name: "Calculator", state: "open", icon: art(28, 36, "0 0 28 36", svg`<rect width="28" height="36" rx="2" fill="#7c858e"/><rect x="3" y="3" width="22" height="6.500" fill="#3bd0f7"/><g fill="#dfe3e8"><path d="M3 12h6v6H3zM11 12h6v6h-6zM19 12h6v6h-6zM3 20h6v6H3zM11 20h6v6h-6zM3 28h6v6H3zM11 28h6v6h-6z"/></g><path d="M19 20h6v14h-6z" fill="#0f4c8c"/>`) },
  { name: "Chrome one", state: "open", icon: chrome, badge: html`<span class="user">${art(24, 24, "0 0 24 24", svg`<circle cx="12" cy="12" r="12" fill="#1c1210"/><ellipse cx="13" cy="11" rx="4.500" ry="7" fill="#6d4433"/><path d="M6 2q-3 12 2 20" stroke="#38231c" stroke-width="3"/>`)}</span>` },
  { name: "Chrome two", state: "open", icon: chrome, badge: html`<span class="user">${art(24, 24, "0 0 24 24", svg`<circle cx="12" cy="12" r="12" fill="#b8dcf5"/><circle cx="12" cy="12" r="9.800" fill="#120d24"/><circle cx="12" cy="12" r="3.500" fill="#733050"/><circle cx="12" cy="12" r="1.700" fill="#ef6a5d"/>`)}</span>` },
  { name: "Chrome three", state: "open", icon: chrome, badge: html`<span class="user">${art(24, 24, "0 0 24 24", svg`<circle cx="12" cy="12" r="12" fill="#3f7fe8"/><rect x="5.500" y="5.500" width="13" height="13" rx="3" fill="#fffbe8" stroke="#b7d88e" stroke-width="1.500"/>`)}</span>` },
  { name: "Chrome four", state: "active", icon: chrome, badge: html`<span class="user">${art(24, 24, "0 0 32 32", smile)}</span>` },
  { name: "Excel", state: "open", icon: office("X", ["#33c481", "#21a366", "#107c41", "#185c37", "#107c41"]) },
  { name: "Word", state: "open", icon: office("W", ["#41a5ee", "#2b7cd3", "#185abd", "#103f91", "#185abd"]) },
];

@customElement("task-bar")
class TaskBar extends LitElement {
  static styles = css`
    :host { display: flex; align-items: center; height: 70px; border-top: 2px solid #4d4340; padding: 0 25px 0 31px; color: #fff; font: 17px/24px "Open Sans", "Noto Sans", sans-serif;
      background: linear-gradient(90deg, #271e1c 0, #36191c 12%, #36191c 40%, #2c1e18 48%, #2f2013 56%, #25211e 63%, #2f2013 69%, #301f11 78%, #27211c 83%, #2f2013 88%, #301f11 100%); }
    svg { display: block; flex: none; }
    button { border: 0; padding: 0; background: none; color: inherit; font: inherit; display: grid; place-items: center; flex: none; }
    .find { display: flex; align-items: center; gap: 14px; flex: 0 1 330px; min-width: 0; height: 48px; box-sizing: border-box; margin: 0 3px 0 20px; padding: 0 8px 0 17px; border: 1px solid #6a5352; border-top: 2px solid #775f60; border-radius: 24px; background: #51393a; }
    .find input { flex: 1; min-width: 0; padding: 0; border: 0; outline: 0; background: none; color: #fff; font: 19px/26px "Open Sans", "Noto Sans", sans-serif; }
    .find input::placeholder { color: #d8cfcf; opacity: 1; }
    .task { position: relative; width: 66px; height: 70px; }
    .open::after, .active::after { content: ""; position: absolute; bottom: 6px; left: 29px; width: 9px; height: 5px; border-radius: 3px; background: #9b9592; }
    .active::before { content: ""; position: absolute; inset: 4px 3px 6px; border: 1px solid #4c3e34; border-radius: 6px; background: #3c3029; }
    .active svg { position: relative; }
    .active::after { left: 21px; width: 24px; background: #f47b63; }
    .user { position: absolute; right: 9px; top: 9px; }
    .bubble { position: absolute; right: 7px; top: 13px; width: 22px; height: 21px; border-radius: 11px; background: #f23d36; font-size: 14px; line-height: 21px; }
    .tray { display: flex; align-items: center; margin-left: auto; }
    .up { width: 28px; height: 40px; margin-right: 22px; }
    .cloud { margin-right: 26px; }
    .lang { text-align: center; line-height: 23px; margin-right: 27px; }
    .set { display: flex; gap: 12px; margin-right: 26px; }
    .time { text-align: right; margin-right: 11px; }
    .count { width: 24px; height: 24px; border-radius: 12px; background: #f47b63; color: #111; font-size: 14px; }
  `;

  render() {
    return html`
      <button aria-label="Start">${art(35, 35, "0 0 35 35", svg`
        <defs><linearGradient id="w" x1="0" y1="0" x2="35" y2="35" gradientUnits="userSpaceOnUse"><stop stop-color="#7df0ff"/><stop offset="1" stop-color="#0d93f5"/></linearGradient></defs>
        <path d="M1 0h16v17H0V1zM18 0h16l1 1v16H18zM0 18h17v17H1l-1-1zM18 18h17v16l-1 1H18z" fill="url(#w)"/>`)}</button>
      <div class="find">
        ${art(24, 24, "0 0 24 24", svg`<circle cx="10" cy="10" r="8.200" stroke="#f0ebeb" stroke-width="2.200"/><path d="M16 16l6.500 6.500" stroke="#f0ebeb" stroke-width="2.800"/>`)}
        <input type="search" aria-label="Search Windows" placeholder="Search" />
        ${art(30, 30, "0 0 30 30", svg`<path d="M15 1a14 13.500 0 1 1-7 25.500L1 29l1.500-6.500A13.500 13.500 0 0 1 15 1z" fill="#fff" stroke="#1f7fe5" stroke-width="2"/>
          <path d="M11.500 6.500v13.500q0 3 3.500 2.500l6-3.500q2.500-3-1-5l-4-1.500" stroke="#1b74e4" stroke-width="3.400" stroke-linejoin="round"/>`)}
      </div>
      ${TASKS.map((t) => html`<button class=${classMap({ task: true, open: t.state === "open", active: t.state === "active" })} aria-label=${t.name}>${t.icon}${t.badge ?? nothing}</button>`)}
      <div class="tray">
        <button class="up" aria-label="Hidden icons">${art(18, 12, "0 0 18 12", svg`<path d="M1.500 10L9 2.500l7.500 7.500" stroke="#fff" stroke-width="2.200"/>`)}</button>
        <button class="cloud" aria-label="OneDrive">${art(26, 22, "0 0 26 22", svg`<path d="M6 16a5.500 5.500 0 0 1 0-11 8 8 0 0 1 14.500 1L22 12l-6 4z" fill="#a6a4a3"/><path d="M5 16a4.500 4.500 0 0 1 0-9q5-1 8 4l1 5z" fill="#e9e9e9"/><circle cx="18.500" cy="14" r="7" fill="#d9232e"/><path d="M15.500 11l6 6M21.500 11l-6 6" stroke="#fff" stroke-width="2"/>`)}</button>
        <div class="lang">ENG<br />US</div>
        <div class="set">
          ${art(25, 24, "0 0 25 24", svg`<path d="M16 1.500H3a2 2 0 0 0-2 2v13a2 2 0 0 0 2 2h17v-7M6 22.800h12M8.500 18.500v4M14.500 18.500v4M17.500 1.500h6v5a3 3 0 0 1-6 0zM20.500 9.500V24" stroke="#fff" stroke-width="1.800"/>`)}
          ${art(24, 22, "0 0 24 22", svg`<path d="M1 8h4l5-5v16l-5-5H1z" stroke="#fff" stroke-width="1.700" stroke-linejoin="round"/><path d="M13 8q2 3 0 6M16 5q4.500 6 0 12" stroke="#fff" stroke-width="1.700"/><path d="M19.500 2.500q6.500 8.500 0 17" stroke="#766b60" stroke-width="1.700"/>`)}
          ${art(25, 20, "0 0 25 20", svg`<path d="M11 4h9a2 2 0 0 1 2 2v10a2 2 0 0 1-2 2H4a2 2 0 0 1-2-2v-3" stroke="#fff" stroke-width="1.700"/><path d="M11 7h8v8H6.500zM22.500 8.500h2v5h-2z" fill="#fff"/><path d="M6 0L0 8h4l-2 7 9-9H7l2-6z" fill="#fff"/>`)}
        </div>
        <div class="time">7:48 am<br />07/09/2023</div>
        <button class="count" aria-label="Notifications">1</button>
      </div>
    `;
  }
}

@customElement("app-root")
class AppRoot extends LitElement {
  static styles = css`
    :host { display: flex; flex-direction: column; min-height: 100vh; }
    mail-app { flex: 1; }
  `;
  render() {
    return html`<browser-frame></browser-frame><mail-app></mail-app><task-bar></task-bar>`;
  }
}
